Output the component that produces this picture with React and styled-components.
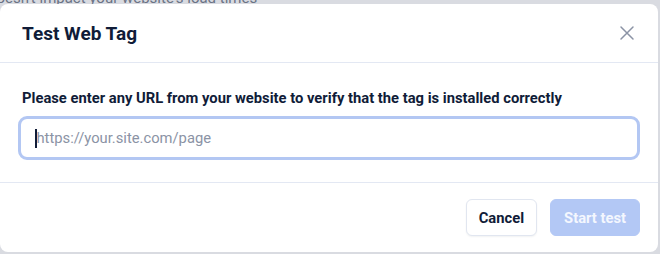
import React from 'react';
import styled, { createGlobalStyle } from 'styled-components';

const Global = createGlobalStyle`
  html, body {
    margin: 0;
    background: #d9dbe1;
    font-family: Roboto, "Liberation Sans", sans-serif;
  }
`;

const Backdrop = styled.div`
  width: 660px;
  height: 254px;
  display: flex;
  flex-direction: column;
`;

const Strip = styled.div`
  height: 4px;
  flex-shrink: 0;
  overflow: hidden;
  font-size: 15px;
  line-height: 18px;
  color: #6b7385;
  white-space: nowrap;
  text-indent: -12px;
`;

const BehindText = styled.p`
  margin: -11px 0 0;
`;

const Modal = styled.div`
  width: 658px;
  height: 248px;
  background: #fff;
  border-radius: 8px;
  display: flex;
  flex-direction: column;
`;

const Header = styled.div`
  height: 58px;
  flex-shrink: 0;
  display: flex;
  align-items: center;
  justify-content: space-between;
  padding: 0 22px;
  border-bottom: 1px solid #e3e8f3;
`;

const Title = styled.h2`
  margin: 0;
  font-size: 19px;
  font-weight: 700;
  color: #101c38;
`;

const Close = styled.button`
  border: none;
  background: none;
  padding: 0;
  display: flex;
  color: #8b93a5;
  margin-right: 1px;
`;

const Body = styled.div`
  flex-shrink: 0;
  padding: 26px 18px 22px;
  border-bottom: 1px solid #e3e8f3;
`;

const Label = styled.label`
  display: block;
  font-size: 14.75px;
  line-height: 18px;
  font-weight: 700;
  color: #101c38;
  margin: 0 0 9px 4px;
`;

const Input = styled.div`
  height: 44px;
  width: 622px;
  box-sizing: border-box;
  border: 3px solid #b3c7f3;
  border-radius: 9px;
  display: flex;
  align-items: center;
  padding-left: 14px;
  font-size: 14.75px;
  color: #8b93a5;
`;

const Caret = styled.span`
  display: inline-block;
  width: 1.5px;
  height: 19px;
  background: #101c38;
`;

const Footer = styled.div`
  flex: 1;
  display: flex;
  justify-content: flex-end;
  align-items: flex-start;
  gap: 13px;
  padding: 16px 18px 0;
`;

const Button = styled.button`
  height: 37px;
  padding: 0 ${({ primary }) => (primary ? '13px' : '12px')};
  border-radius: 6px;
  font-family: inherit;
  font-size: 14.75px;
  font-weight: 700;
  border: 1px solid ${({ primary }) => (primary ? '#b3c8f5' : '#e1e6f0')};
  background: ${({ primary }) => (primary ? '#b3c8f5' : '#fff')};
  color: ${({ primary }) => (primary ? '#f4f7fe' : '#101c38')};
  box-shadow: ${({ primary }) => (primary ? 'none' : '0 1px 2px rgba(16,28,56,0.06)')};
`;

export default function App() {
  return (
    <Backdrop>
      <Global />
      <Strip>
        <BehindText>doesn't impact your website's load times</BehindText>
      </Strip>
      <Modal>
        <Header>
          <Title>Test Web Tag</Title>
          <Close>
            <svg width="16" height="16" viewBox="0 0 16 16" fill="none" stroke="currentColor" strokeWidth="1.5" strokeLinecap="round">
              <path d="M2 2l12 12M14 2L2 14" />
            </svg>
          </Close>
        </Header>
        <Body>
          <Label>Please enter any URL from your website to verify that the tag is installed correctly</Label>
          <Input>
            <Caret />
            https://your.site.com/page
          </Input>
        </Body>
        <Footer>
          <Button>Cancel</Button>
          <Button primary>Start test</Button>
        </Footer>
      </Modal>
    </Backdrop>
  );
}
